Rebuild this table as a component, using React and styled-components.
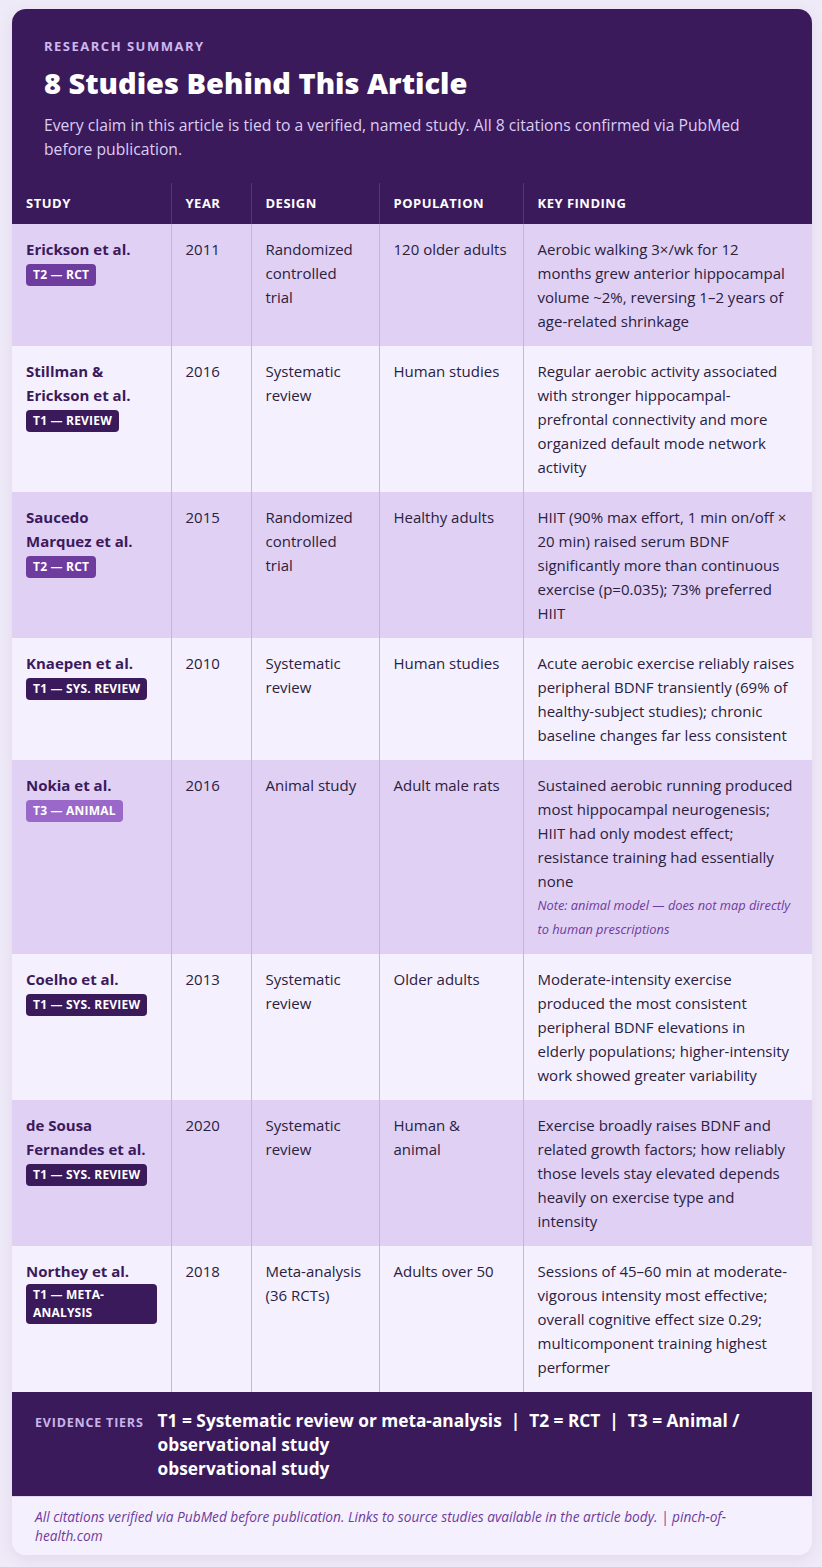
import React from 'react';
import styled, { createGlobalStyle } from 'styled-components';

const GlobalStyle = createGlobalStyle`
  * { box-sizing: border-box; }
  body {
    margin: 0;
    background: #efeaf8;
    font-family: "Open Sans", "Noto Sans", sans-serif;
    color: #2a2140;
  }
`;

const studies = [
    {
        name: 'Erickson et al.',
        tier: 'T2 — RCT',
        tone: 'rct',
        year: '2011',
        design: 'Randomized controlled trial',
        population: '120 older adults',
        finding: [
            'Aerobic walking 3×/wk for 12',
            'months grew anterior hippocampal',
            'volume ~2%, reversing 1–2 years of',
            'age-related shrinkage',
        ],
    },
    {
        name: 'Stillman & Erickson et al.',
        tier: 'T1 — REVIEW',
        tone: 'review',
        year: '2016',
        design: 'Systematic review',
        population: 'Human studies',
        finding: [
            'Regular aerobic activity associated',
            'with stronger hippocampal-',
            'prefrontal connectivity and more',
            'organized default mode network',
            'activity',
        ],
    },
    {
        name: 'Saucedo Marquez et al.',
        tier: 'T2 — RCT',
        tone: 'rct',
        year: '2015',
        design: 'Randomized controlled trial',
        population: 'Healthy adults',
        finding: [
            'HIIT (90% max effort, 1 min on/off ×',
            '20 min) raised serum BDNF',
            'significantly more than continuous',
            'exercise (p=0.035); 73% preferred',
            'HIIT',
        ],
    },
    {
        name: 'Knaepen et al.',
        tier: 'T1 — SYS. REVIEW',
        tone: 'review',
        year: '2010',
        design: 'Systematic review',
        population: 'Human studies',
        finding: [
            'Acute aerobic exercise reliably raises',
            'peripheral BDNF transiently (69% of',
            'healthy-subject studies); chronic',
            'baseline changes far less consistent',
        ],
    },
    {
        name: 'Nokia et al.',
        tier: 'T3 — ANIMAL',
        tone: 'animal',
        year: '2016',
        design: 'Animal study',
        population: 'Adult male rats',
        finding: [
            'Sustained aerobic running produced',
            'most hippocampal neurogenesis;',
            'HIIT had only modest effect;',
            'resistance training had essentially',
            'none',
        ],
        note: 'Note: animal model — does not map directly to human prescriptions',
    },
    {
        name: 'Coelho et al.',
        tier: 'T1 — SYS. REVIEW',
        tone: 'review',
        year: '2013',
        design: 'Systematic review',
        population: 'Older adults',
        finding: [
            'Moderate-intensity exercise',
            'produced the most consistent',
            'peripheral BDNF elevations in',
            'elderly populations; higher-intensity',
            'work showed greater variability',
        ],
    },
    {
        name: 'de Sousa Fernandes et al.',
        tier: 'T1 — SYS. REVIEW',
        tone: 'review',
        year: '2020',
        design: 'Systematic review',
        population: 'Human & animal',
        finding: [
            'Exercise broadly raises BDNF and',
            'related growth factors; how reliably',
            'those levels stay elevated depends',
            'heavily on exercise type and',
            'intensity',
        ],
    },
    {
        name: 'Northey et al.',
        tier: 'T1 — META-ANALYSIS',
        tone: 'review',
        year: '2018',
        design: 'Meta-analysis (36 RCTs)',
        population: 'Adults over 50',
        finding: [
            'Sessions of 45–60 min at moderate-',
            'vigorous intensity most effective;',
            'overall cognitive effect size 0.29;',
            'multicomponent training highest',
            'performer',
        ],
    },
];

const badgeColors = {
    rct: '#6e3b9e',
    review: '#3b1a5c',
    animal: '#9a68c8',
};

const App = () => {
    return (
        <Page>
            <GlobalStyle />
            <Card>
                <Header>
                    <Eyebrow>Research Summary</Eyebrow>
                    <Title>8 Studies Behind This Article</Title>
                    <Intro>
                        Every claim in this article is tied to a verified, named study. All 8 citations confirmed via PubMed before publication.
                    </Intro>
                </Header>

                <Table>
                    <colgroup>
                        <col style={{ width: 159 }} />
                        <col style={{ width: 80 }} />
                        <col style={{ width: 128 }} />
                        <col style={{ width: 144 }} />
                        <col style={{ width: 289 }} />
                    </colgroup>
                    <thead>
                        <tr>
                            <HeadCell>Study</HeadCell>
                            <HeadCell>Year</HeadCell>
                            <HeadCell>Design</HeadCell>
                            <HeadCell>Population</HeadCell>
                            <HeadCell>Key Finding</HeadCell>
                        </tr>
                    </thead>
                    <tbody>
                        {studies.map((s, i) => (
                            <Row key={s.name} $shaded={i % 2 === 0}>
                                <Cell>
                                    <StudyName>{s.name}</StudyName>
                                    <Badge $bg={badgeColors[s.tone]}>{s.tier}</Badge>
                                </Cell>
                                <Cell>{s.year}</Cell>
                                <Cell>{s.design}</Cell>
                                <Cell>{s.population}</Cell>
                                <Cell>
                                    {s.finding.map((line, n) => (
                                        <React.Fragment key={n}>
                                            {n > 0 && <br />}
                                            {line}
                                        </React.Fragment>
                                    ))}
                                    {s.note && <Note>{s.note}</Note>}
                                </Cell>
                            </Row>
                        ))}
                    </tbody>
                </Table>

                <Tiers>
                    <TiersLabel>Evidence Tiers</TiersLabel>
                    <TiersText>
                        T1 = Systematic review or meta-analysis &nbsp;|&nbsp; T2 = RCT &nbsp;|&nbsp; T3 = Animal /<br />
                        observational study<br />
                        observational study
                    </TiersText>
                </Tiers>

                <Footnote>
                    All citations verified via PubMed before publication. Links to source studies available in the article body. | pinch-of-health.com
                </Footnote>
            </Card>
        </Page>
    );
};

const Page = styled.div`
    padding: 9px 10px 12px 12px;
`;

const Card = styled.div`
    width: 800px;
    border-radius: 14px;
    overflow: hidden;
    background: #f5f0fd;
    box-shadow: 0 4px 16px rgba(59, 26, 92, 0.08);
`;

const Header = styled.div`
    background: #3b1a5c;
    padding: 28px 32px 22px;
`;

const Eyebrow = styled.div`
    font-size: 13px;
    line-height: 18px;
    font-weight: 700;
    letter-spacing: 1.5px;
    text-transform: uppercase;
    color: #cdb8ef;
    margin-bottom: 10px;
`;

const Title = styled.h1`
    margin: 0 0 12px;
    font-size: 29px;
    line-height: 36px;
    font-weight: 800;
    color: #ffffff;
`;

const Intro = styled.p`
    margin: 0;
    font-size: 15.7px;
    line-height: 24px;
    color: #dccdf3;
`;

const Table = styled.table`
    width: 800px;
    table-layout: fixed;
    border-collapse: collapse;
`;

const HeadCell = styled.th`
    background: #3b1a5c;
    color: #ffffff;
    text-align: left;
    font-size: 13px;
    line-height: 17px;
    font-weight: 700;
    letter-spacing: 0.5px;
    text-transform: uppercase;
    padding: 12px 14px;
    border-right: 1px solid #56367a;

    &:last-child {
        border-right: none;
    }
`;

const Row = styled.tr`
    background: ${({ $shaded }) => ($shaded ? '#e0d0f4' : '#f5f0fd')};
`;

const Cell = styled.td`
    vertical-align: top;
    padding: 13px 14px;
    font-size: 15px;
    line-height: 24px;
    color: #2a2140;
    border-right: 1px solid #c8b3e3;

    &:last-child {
        border-right: none;
    }
`;

const StudyName = styled.div`
    font-weight: 700;
    color: #3b1a5c;
`;

const Badge = styled.span`
    display: inline-block;
    margin-top: 1px;
    padding: 2px 7px;
    border-radius: 4px;
    background: ${({ $bg }) => $bg};
    color: #ffffff;
    font-size: 12px;
    line-height: 18px;
    font-weight: 700;
    letter-spacing: 0.2px;
`;

const Note = styled.div`
    font-size: 12.8px;
    line-height: 24px;
    font-style: italic;
    color: #6e3b9e;
`;

const Tiers = styled.div`
    display: flex;
    align-items: baseline;
    gap: 14px;
    background: #3b1a5c;
    padding: 17px 23px 15px;
`;

const TiersLabel = styled.div`
    flex-shrink: 0;
    font-size: 12.5px;
    font-weight: 700;
    letter-spacing: 0.8px;
    text-transform: uppercase;
    color: #c9b3e8;
`;

const TiersText = styled.div`
    font-size: 17.3px;
    line-height: 24px;
    font-weight: 700;
    color: #ffffff;
`;

const Footnote = styled.div`
    padding: 10px 30px 10px 23px;
    font-size: 13.7px;
    line-height: 19px;
    font-style: italic;
    color: #6e3b9e;
    background: #f5f0fd;
    border-top: 1px solid #e2d6f3;
`;

export default App;
